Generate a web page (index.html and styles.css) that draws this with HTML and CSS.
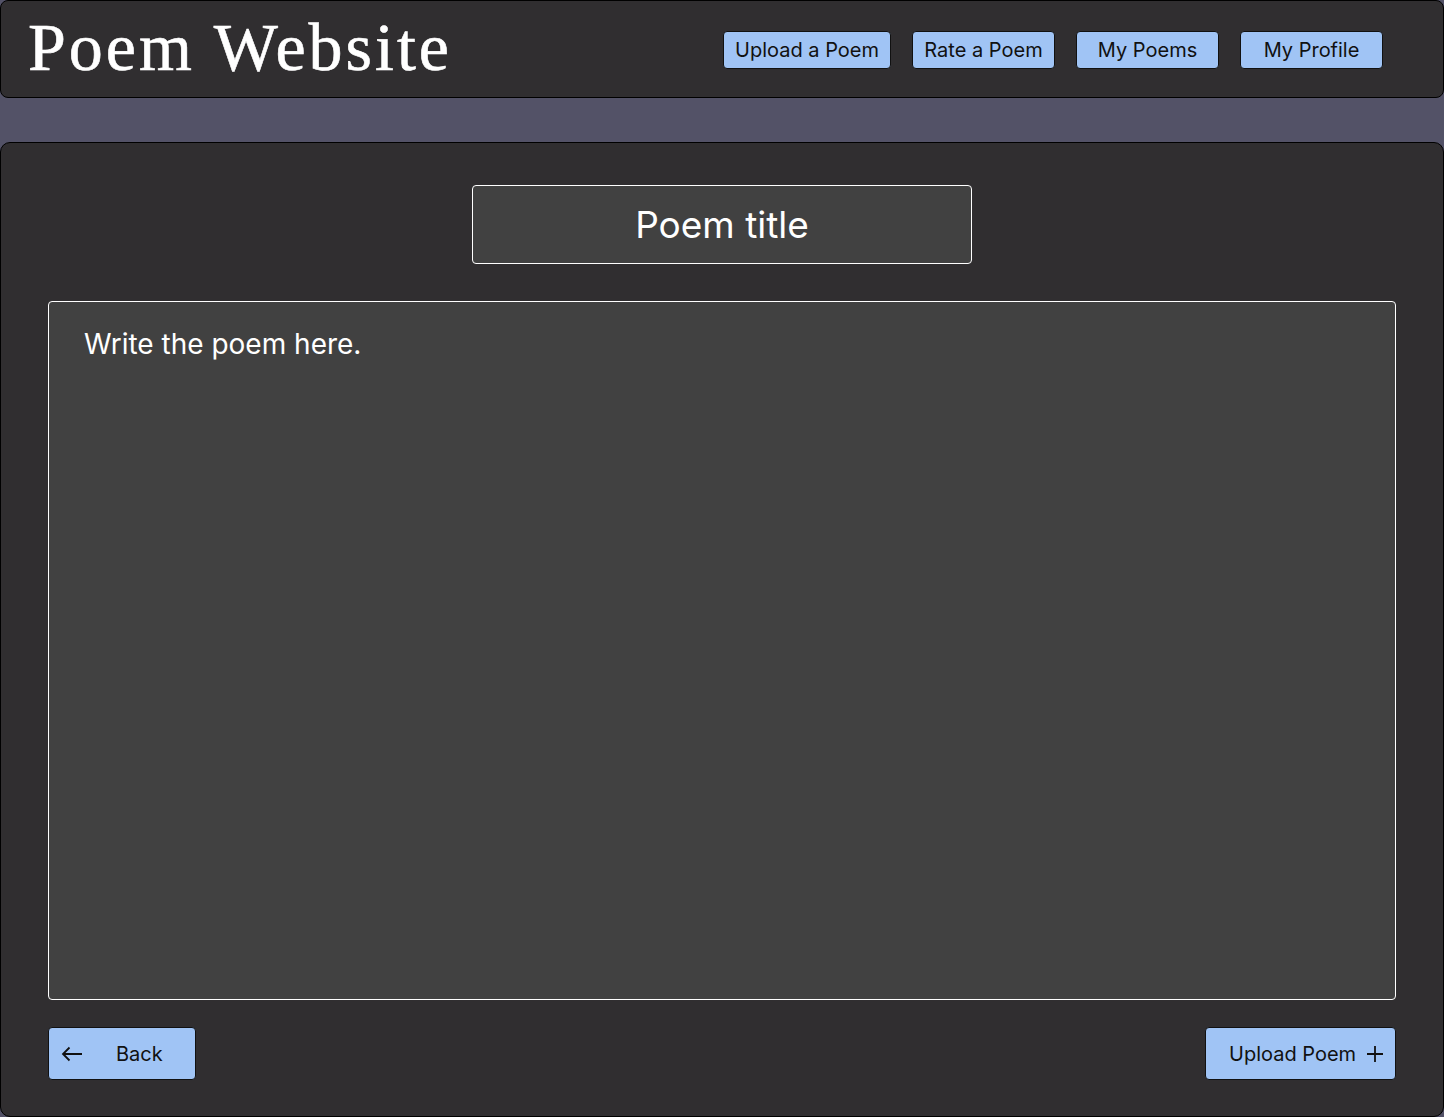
FILE: index.html
```html
<!DOCTYPE html>
<html lang="en">
<head>
<meta charset="utf-8">
<title>Poem Website</title>
<link rel="stylesheet" href="styles.css">
</head>
<body>
<header class="topbar">
  <h1 class="brand">Poem Website</h1>
  <nav class="nav">
    <a class="nav-btn nav-upload" href="#">Upload a Poem</a>
    <a class="nav-btn" href="#">Rate a Poem</a>
    <a class="nav-btn" href="#">My Poems</a>
    <a class="nav-btn" href="#">My Profile</a>
  </nav>
</header>
<main class="panel">
  <div class="title-row">
    <div class="title-box">Poem title</div>
  </div>
  <div class="poem-box">Write the poem here.</div>
  <div class="actions">
    <a class="action-btn back-btn" href="#">
      <svg class="ico" width="22" height="16" viewBox="0 0 22 16"><path d="M21 8H2M8.5 1.5L2 8l6.5 6.5" fill="none" stroke="#111" stroke-width="1.8"/></svg>
      <span>Back</span>
    </a>
    <a class="action-btn upload-btn" href="#">
      <span>Upload Poem</span>
      <svg class="ico" width="18" height="18" viewBox="0 0 18 18"><path d="M9 1v16M1 9h16" fill="none" stroke="#111" stroke-width="1.8"/></svg>
    </a>
  </div>
</main>
</body>
</html>
```
FILE: styles.css
```css
* { box-sizing: border-box; }
html, body { margin: 0; padding: 0; }
body {
  background: #535267;
  font-family: Inter, "Noto Sans", sans-serif;
  height: 1117px;
  display: flex;
  flex-direction: column;
}
.topbar {
  height: 98px;
  background: #302e30;
  border: 1px solid #000;
  border-radius: 8px;
  display: flex;
  align-items: center;
  justify-content: space-between;
  padding: 0 60px 0 27px;
}
.brand {
  margin: 0;
  color: #fff;
  font-family: "Liberation Serif", "DejaVu Serif", serif;
  font-weight: normal;
  font-size: 68px;
  letter-spacing: 3px;
  line-height: 1;
  margin-top: -4px;
  -webkit-text-stroke: 0.6px #fff;
}
.nav {
  display: flex;
  gap: 21px;
  margin-top: 1px;
}
.nav-btn {
  display: flex;
  align-items: center;
  justify-content: center;
  height: 38px;
  min-width: 143px;
  padding: 0 11px;
  background: #a0c4f5;
  border: 1px solid #111;
  border-radius: 4px;
  color: #111;
  text-decoration: none;
  font-size: 20px;
}
.panel {
  margin: 44px 0 0 0;
  flex: 1;
  background: #302e30;
  border: 1px solid #000;
  border-radius: 10px;
  padding: 42px 47px 36px 47px;
  display: flex;
  flex-direction: column;
}
.title-row {
  display: flex;
  justify-content: center;
}
.title-box {
  width: 500px;
  height: 79px;
  background: #414141;
  border: 1px solid #fff;
  border-radius: 4px;
  color: #fff;
  font-size: 37px;
  display: flex;
  align-items: center;
  justify-content: center;
}
.poem-box {
  margin-top: 37px;
  height: 699px;
  background: #414141;
  border: 1px solid #fff;
  border-radius: 4px;
  color: #fff;
  font-size: 28px;
  padding: 25px 35px;
}
.actions {
  margin-top: 27px;
  display: flex;
  justify-content: space-between;
}
.action-btn {
  display: flex;
  align-items: center;
  height: 53px;
  background: #a0c4f5;
  border: 1px solid #111;
  border-radius: 4px;
  color: #111;
  text-decoration: none;
  font-size: 20px;
}
.back-btn {
  width: 148px;
  padding-left: 12px;
  gap: 33px;
}
.upload-btn {
  width: 191px;
  padding-left: 23px;
  gap: 10px;
}
```
